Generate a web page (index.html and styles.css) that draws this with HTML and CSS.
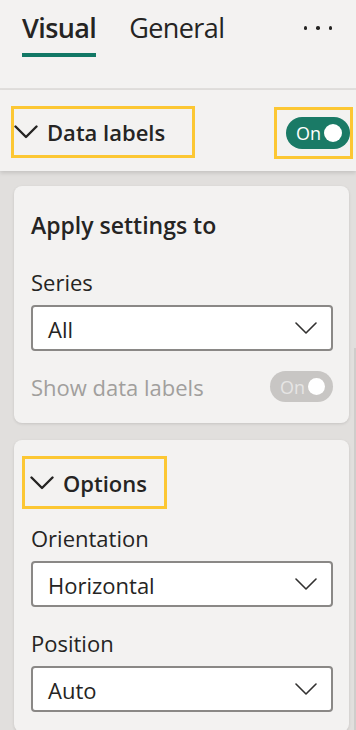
FILE: index.html
```html
<!DOCTYPE html>
<html lang="en">
<head>
<meta charset="utf-8">
<title>Format pane</title>
<link rel="stylesheet" href="styles.css">
</head>
<body>
<div class="pane">
  <header class="tabs">
    <div class="tab active">Visual</div>
    <div class="tab">General</div>
    <div class="more"><span class="dot"></span><span class="dot"></span><span class="dot"></span></div>
  </header>
  <section class="section-head">
    <div class="hl hl-title">
      <svg class="chev-lg" width="24" height="14" viewBox="0 0 24 14"><path d="M1.5 1.5 L12 12 L22.5 1.5" fill="none" stroke="#252423" stroke-width="2.4" stroke-linecap="round" stroke-linejoin="round"/></svg>
      <span class="head-text">Data labels</span>
    </div>
    <div class="hl hl-toggle">
      <div class="toggle on"><span class="tog-text">On</span><span class="knob"></span></div>
    </div>
  </section>
  <main class="cards">
    <div class="card card1">
      <div class="card-title">Apply settings to</div>
      <div class="field">
        <div class="label">Series</div>
        <div class="dropdown"><span class="dd-text">All</span>
          <svg class="chev-sm" width="22" height="12" viewBox="0 0 22 12"><path d="M1 1 L11 11 L21 1" fill="none" stroke="#323130" stroke-width="1.6" stroke-linecap="round" stroke-linejoin="round"/></svg>
        </div>
      </div>
      <div class="row-toggle">
        <span class="label disabled">Show data labels</span>
        <div class="toggle off"><span class="tog-text">On</span><span class="knob"></span></div>
      </div>
    </div>
    <div class="card card2">
      <div class="hl hl-options">
        <svg class="chev-lg" width="24" height="14" viewBox="0 0 24 14"><path d="M1.5 1.5 L12 12 L22.5 1.5" fill="none" stroke="#252423" stroke-width="2.4" stroke-linecap="round" stroke-linejoin="round"/></svg>
        <span class="head-text">Options</span>
      </div>
      <div class="field first">
        <div class="label">Orientation</div>
        <div class="dropdown"><span class="dd-text">Horizontal</span>
          <svg class="chev-sm" width="22" height="12" viewBox="0 0 22 12"><path d="M1 1 L11 11 L21 1" fill="none" stroke="#323130" stroke-width="1.6" stroke-linecap="round" stroke-linejoin="round"/></svg>
        </div>
      </div>
      <div class="field second">
        <div class="label">Position</div>
        <div class="dropdown"><span class="dd-text">Auto</span>
          <svg class="chev-sm" width="22" height="12" viewBox="0 0 22 12"><path d="M1 1 L11 11 L21 1" fill="none" stroke="#323130" stroke-width="1.6" stroke-linecap="round" stroke-linejoin="round"/></svg>
        </div>
      </div>
    </div>
  </main>
  <div class="scrollbar"></div>
</div>
</body>
</html>
```
FILE: styles.css
```css
* { box-sizing: border-box; }
html, body { margin: 0; padding: 0; }
body {
  font-family: "Open Sans", "Noto Sans", sans-serif;
  color: #252423;
  background: #e1dfdd;
  width: 356px;
  height: 730px;
  overflow: hidden;
}
.pane { position: relative; width: 356px; height: 730px; display: flex; flex-direction: column; }

.tabs {
  height: 90px;
  flex: none;
  background: #f3f2f1;
  border-bottom: 2px solid #e1dfdd;
  display: flex;
  align-items: flex-start;
  padding: 10px 0 0 22px;
}
.tab {
  font-size: 27px;
  line-height: 36px;
  letter-spacing: -0.6px;
  color: #252423;
  margin-right: 33px;
  padding-bottom: 7px;
  border-bottom: 4px solid transparent;
}
.tab.active { font-weight: 600; border-bottom-color: #117865; }
.more { margin-left: auto; margin-right: 24px; display: flex; gap: 9px; padding-top: 16px; }
.dot { width: 3.5px; height: 3.5px; border-radius: 50%; background: #252423; display: block; }

.section-head {
  position: relative;
  z-index: 1;
  height: 81px;
  flex: none;
  background: #f3f2f1;
  display: flex;
  justify-content: space-between;
  align-items: flex-start;
  padding: 16px 3px 0 11px;
  box-shadow: 0 2px 4px rgba(0,0,0,0.13);
}
.hl { border: 3px solid #fcc733; display: flex; align-items: center; }
.hl-title { width: 184px; height: 52px; padding-left: 0; gap: 9px; }
.hl-toggle { width: 79px; height: 52px; margin-top: 1px; padding-left: 9px; }
.head-text { font-size: 22px; font-weight: 600; color: #252423; line-height: 30px; }

.toggle {
  width: 64px;
  height: 32px;
  border-radius: 16px;
  display: flex;
  align-items: center;
  padding-left: 10px;
  position: relative;
}
.toggle.on { background: #1a7a66; color: #ffffff; }
.tog-text { font-size: 18px; line-height: 20px; }
.knob { width: 18px; height: 18px; border-radius: 50%; background: #ffffff; margin-left: auto; margin-right: 8px; }
.toggle.off { width: 63px; height: 31px; background: #c8c6c4; color: #e6e5e4; }
.toggle.off .knob { width: 17px; height: 17px; margin-right: 8px; }

.cards {
  flex: 1;
  display: flex;
  flex-direction: column;
  gap: 17px;
  padding: 15px 7px 0 14px;
}
.card {
  background: #f3f2f1;
  border-radius: 8px;
  box-shadow: 0 1px 3px rgba(0,0,0,0.12);
  padding: 0 16px 0 17px;
  flex: none;
}
.card1 { padding-top: 24px; padding-bottom: 21px; }
.card2 { padding-top: 16px; padding-bottom: 20px; }

.card-title { font-size: 23px; font-weight: 600; line-height: 30px; color: #252423; }
.label { font-size: 22px; line-height: 28px; color: #252423; }
.label.disabled { color: #a19f9d; }
.field { display: flex; flex-direction: column; gap: 9px; }
.card1 .field { margin-top: 28px; }
.field.first { margin-top: 15px; }
.field.second { margin-top: 22px; }

.dropdown {
  height: 46px;
  background: #ffffff;
  border: 2px solid #8a8886;
  border-radius: 4px;
  display: flex;
  align-items: center;
  padding: 2px 14px 0 15px;
}
.dd-text { font-size: 22px; color: #252423; }
.chev-sm { margin-left: auto; margin-top: -2px; }

.row-toggle { display: flex; justify-content: space-between; align-items: center; margin-top: 20px; height: 31px; }

.hl-options { width: 145px; height: 53px; margin-left: -9px; padding-left: 5px; gap: 9px; }

.scrollbar {
  position: absolute;
  right: 0;
  top: 348px;
  bottom: 0;
  width: 2px;
  background: #cfcdcb;
}
```
